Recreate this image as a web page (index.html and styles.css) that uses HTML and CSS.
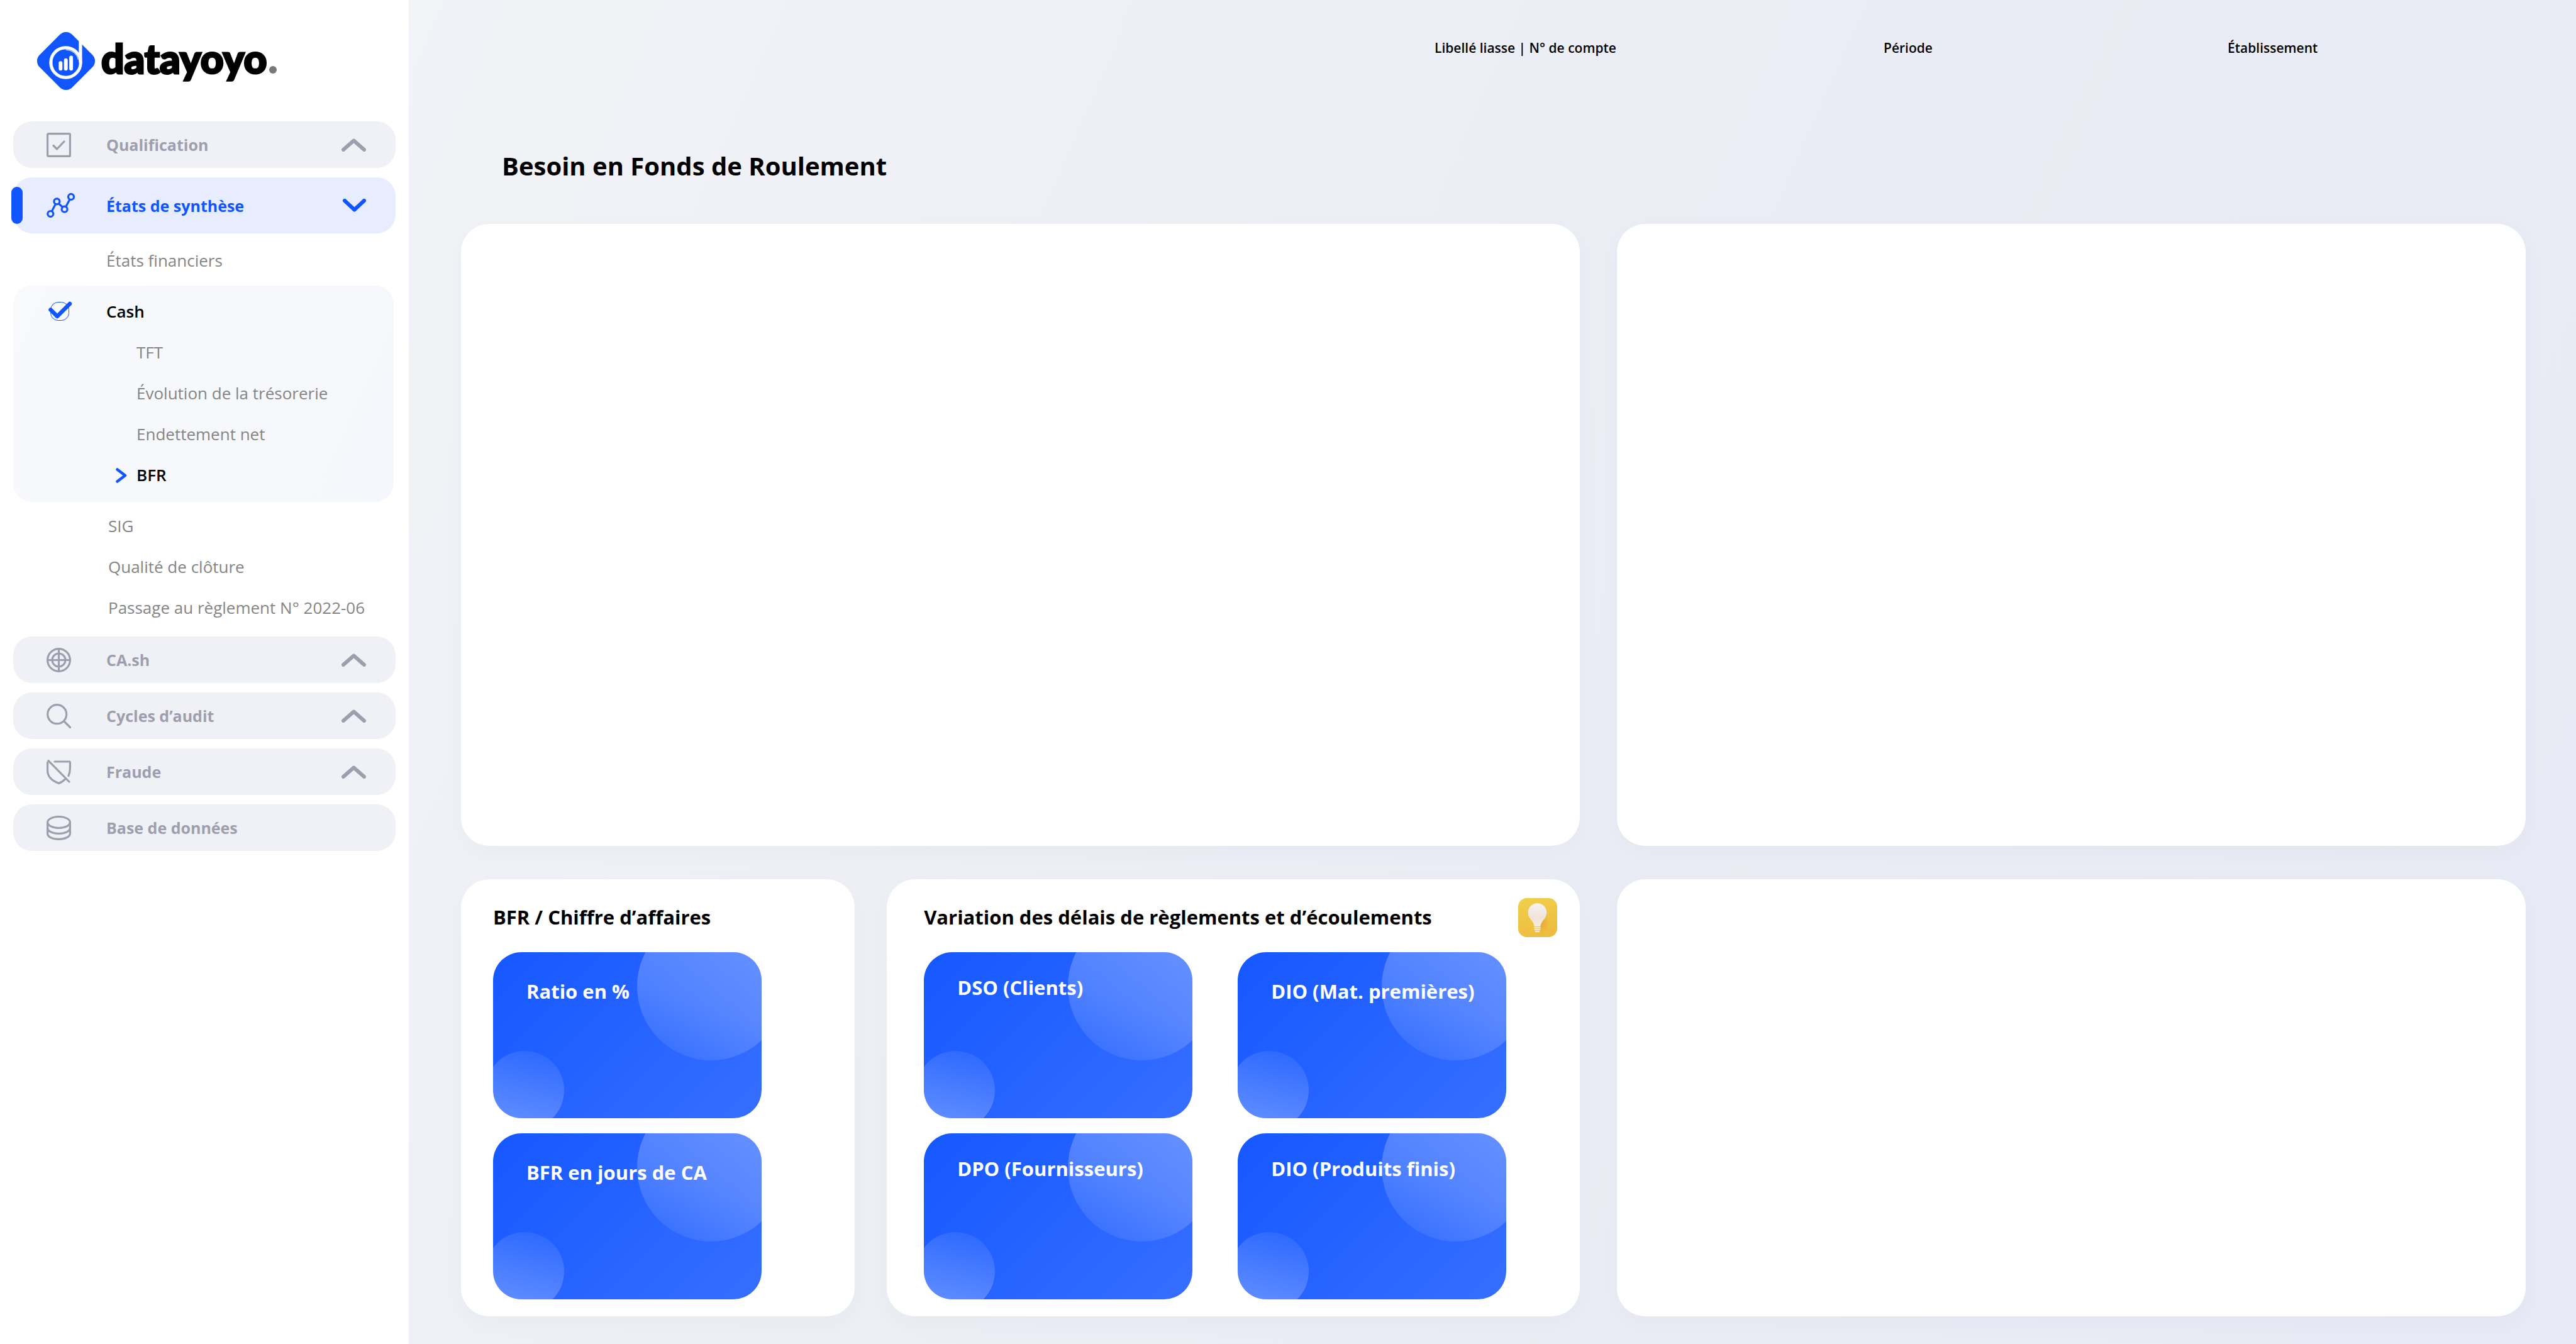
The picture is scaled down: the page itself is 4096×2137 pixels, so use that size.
FILE: index.html
```html
<!DOCTYPE html>
<html lang="fr">
<head>
<meta charset="utf-8">
<meta name="viewport" content="width=device-width, initial-scale=1">
<title>datayoyo – Besoin en Fonds de Roulement</title>
<link rel="stylesheet" href="styles.css">
</head>
<body>
<div class="app">
  <aside class="sidebar">
    <a class="brand" href="#">
      <svg class="brand-mark" viewBox="0 0 93 93" aria-hidden="true">
        <rect x="9.5" y="9.5" width="74" height="74" rx="14" fill="#1155ff" transform="rotate(45 46.5 46.5)"/>
        <path d="M67 8h5.300v41h-5.300z" fill="#fff"/>
        <circle cx="46" cy="49" r="24" fill="none" stroke="#fff" stroke-width="5"/>
        <path d="M27 60a21 21 0 0 1 4-27M46 28.500a20 20 0 0 1 20 16" fill="none" stroke="#fff" stroke-width="1"/>
        <path d="M37.700 49.700v9.300M46.200 45.300v13.700M54.700 41v18" fill="none" stroke="#fff" stroke-width="6" stroke-linecap="round"/>
      </svg>
      <span class="brand-name">datayoyo</span><span class="brand-dot"></span>
    </a>

    <nav class="nav">
      <button class="nav-item" type="button">
        <span class="nav-icon"><svg viewBox="0 0 39 39" width="39" height="39"><rect x="1.600" y="1.600" width="35.800" height="35.800" rx="1.500"/><path d="M11 20.500l5.500 5.500L28 14"/></svg></span>
        <span class="nav-label">Qualification</span>
        <svg class="chevron" viewBox="0 0 39 21" width="39" height="21"><path d="M3 18L19.500 3.500 36 18"/></svg>
      </button>

      <button class="nav-item nav-item-active" type="button">
        <span class="nav-icon"><svg viewBox="0 0 45 39" width="45" height="39"><circle cx="6.300" cy="33" r="4.500"/><circle cx="16.400" cy="13.300" r="4.500"/><circle cx="28.600" cy="25.700" r="4.500"/><circle cx="39" cy="6" r="4.500"/><path d="M8.500 28.800l5.800-11.300M19.500 17l6 5.200M30.800 21.500l6-11.300"/></svg></span>
        <span class="nav-label">États de synthèse</span>
        <svg class="chevron" viewBox="0 0 39 21" width="39" height="21"><path d="M5 3l15.500 14.500L36 3"/></svg>
      </button>

      <a class="nav-link nav-link-top nav-link-first" href="#">États financiers</a>

      <div class="nav-group">
        <a class="nav-link nav-link-top nav-link-current" href="#"><svg class="group-check" viewBox="0 0 38 32" width="38" height="32"><rect x="3.500" y="1.500" width="29" height="29" rx="12" stroke-width="1"/><path d="M3.500 13.500L14 24 34 4" stroke-width="6.500"/></svg>Cash</a>
        <a class="nav-link nav-sub" href="#">TFT</a>
        <a class="nav-link nav-sub" href="#">Évolution de la trésorerie</a>
        <a class="nav-link nav-sub" href="#">Endettement net</a>
        <a class="nav-link nav-sub nav-link-current" href="#"><svg class="sub-arrow" viewBox="0 0 18 24" width="18" height="24"><path d="M2.500 2.500L15 12 2.500 21.500" stroke-width="4.500"/></svg>BFR</a>
      </div>

      <div class="nav-links">
        <a class="nav-link" href="#">SIG</a>
        <a class="nav-link" href="#">Qualité de clôture</a>
        <a class="nav-link" href="#">Passage au règlement N° 2022-06</a>
      </div>

      <button class="nav-item" type="button">
        <span class="nav-icon"><svg viewBox="0 0 39 39" width="39" height="39"><circle cx="19.500" cy="19.500" r="17.900"/><circle cx="19.500" cy="19.500" r="10.500"/><path d="M19.500 1.500v36M1.500 19.500h36"/></svg></span>
        <span class="nav-label">CA.sh</span>
        <svg class="chevron" viewBox="0 0 39 21" width="39" height="21"><path d="M3 18L19.500 3.500 36 18"/></svg>
      </button>
      <button class="nav-item" type="button">
        <span class="nav-icon"><svg viewBox="0 0 39 39" width="39" height="39"><circle cx="16.700" cy="16.700" r="15"/><path d="M28 28l9.500 9.500"/></svg></span>
        <span class="nav-label">Cycles d’audit</span>
        <svg class="chevron" viewBox="0 0 39 21" width="39" height="21"><path d="M3 18L19.500 3.500 36 18"/></svg>
      </button>
      <button class="nav-item" type="button">
        <span class="nav-icon"><svg viewBox="0 0 39 39" width="39" height="39"><path d="M3 1.600L36 35M13 3h23.400q1 0 1 1v9q0 7-2.400 12.500M1.600 4v13q0 14 17.900 20.400 6-2 10.500-7"/></svg></span>
        <span class="nav-label">Fraude</span>
        <svg class="chevron" viewBox="0 0 39 21" width="39" height="21"><path d="M3 18L19.500 3.500 36 18"/></svg>
      </button>
      <button class="nav-item" type="button">
        <span class="nav-icon"><svg viewBox="0 0 39 39" width="39" height="39"><ellipse cx="19.500" cy="10.500" rx="17.900" ry="9"/><path d="M1.600 10.500v18c0 5 8 8.900 17.900 8.900s17.900-4 17.900-8.900v-18M1.600 19.500c0 5 8 9 17.900 9s17.900-4 17.900-9"/></svg></span>
        <span class="nav-label">Base de données</span>
      </button>
    </nav>
  </aside>

  <main class="main">
    <header class="filters">
      <span class="filter filter-account">Libellé liasse | N° de compte</span>
      <span class="filter">Période</span>
      <span class="filter">Établissement</span>
    </header>
    <h1 class="page-title">Besoin en Fonds de Roulement</h1>

    <div class="board">
      <section class="card"></section>
      <section class="card"></section>

      <div class="split">
        <section class="card card-ratio">
          <div class="card-head"><h2>BFR / Chiffre d’affaires</h2></div>
          <div class="tiles tiles-single">
            <article class="tile tile-low"><h3>Ratio en %</h3></article>
            <article class="tile tile-low"><h3>BFR en jours de CA</h3></article>
          </div>
        </section>
        <section class="card card-delays">
          <div class="card-head">
            <h2>Variation des délais de règlements et d’écoulements</h2>
            <button class="tip" type="button" aria-label="Conseils">
              <svg viewBox="0 0 63 63">
                <defs>
                  <linearGradient id="tipBg" x1="0" y1="0" x2=".3" y2="1"><stop offset="0" stop-color="#f0d04c"/><stop offset="1" stop-color="#eebd40"/></linearGradient>
                  <linearGradient id="bulb" x1="0" y1="0" x2="0" y2="1"><stop offset="0" stop-color="#f5f3f3"/><stop offset=".6" stop-color="#f1e3d9"/><stop offset="1" stop-color="#f6eade"/></linearGradient>
                  <radialGradient id="glow"><stop offset="0" stop-color="#e8962a" stop-opacity=".7"/><stop offset="1" stop-color="#e8962a" stop-opacity="0"/></radialGradient>
                </defs>
                <rect width="63" height="63" rx="14" fill="url(#tipBg)"/>
                <ellipse cx="37" cy="38" rx="13" ry="20" fill="url(#glow)"/>
                <path d="M31 8.500c8.500 0 15 6.500 15 14.500 0 6-3 10-6 13.500-2 2.500-3.500 5-4 9.500h-10c-.5-4.500-2-7-4-9.500-3-3.500-6-7.500-6-13.500 0-8 6.500-14.500 15-14.500z" fill="url(#bulb)"/>
                <path d="M26.500 48h9M27 51h8M28 54h6" stroke="#fbefe0" stroke-width="2" stroke-linecap="round"/>
              </svg>
            </button>
          </div>
          <div class="tiles">
            <article class="tile"><h3>DSO (Clients)</h3></article>
            <article class="tile tile-low"><h3>DIO (Mat. premières)</h3></article>
            <article class="tile"><h3>DPO (Fournisseurs)</h3></article>
            <article class="tile"><h3>DIO (Produits finis)</h3></article>
          </div>
        </section>
      </div>
      <section class="card"></section>
    </div>
  </main>
</div>
</body>
</html>
```
FILE: styles.css
```css
* { box-sizing: border-box; }

body {
  margin: 0;
  font-family: "Open Sans", "Noto Sans", sans-serif;
  color: #000;
  background: #fff;
}

h1, h2, h3 { margin: 0; }
a { color: inherit; text-decoration: none; }
button { border: 0; padding: 0; font: inherit; cursor: pointer; }

.app {
  display: grid;
  grid-template-columns: 650px minmax(0, 1fr);
  min-height: 100vh;
}

/* Sidebar */
.sidebar { padding: 0 21px 40px; background: #fff; }

.brand {
  display: flex;
  align-items: center;
  height: 193px;
  padding-left: 38px;
}
.brand-mark { width: 92px; height: 92px; margin-right: 10px; }
.brand-name {
  padding-bottom: 8px;
  font-family: Lato, sans-serif;
  font-weight: 900;
  font-size: 64px;
  line-height: 92px;
  -webkit-text-stroke: 3px #000;
}
.brand-dot {
  width: 12px;
  height: 12px;
  margin: 29px 0 0 4px;
  border-radius: 50%;
  background: #787878;
}

.nav { display: flex; flex-direction: column; }
.nav svg {
  fill: none;
  stroke: currentColor;
  stroke-linecap: round;
  stroke-linejoin: round;
}
.nav-item {
  position: relative;
  display: flex;
  align-items: center;
  height: 74px;
  margin-bottom: 15px;
  padding: 0 47px 0 53px;
  border-radius: 30px;
  background: #f0f1f6;
  color: #9e9fae;
  font-size: 25px;
  font-weight: 700;
  text-align: left;
}
.nav-icon { display: flex; width: 95px; stroke-width: 3.200; }
.nav-label { flex: 1; }
.nav-item .chevron { stroke-width: 6; }

.nav-item-active {
  height: 89px;
  margin-bottom: 0;
  background: #e7edff;
  color: #1155ff;
}
.nav-item-active::before {
  content: "";
  position: absolute;
  top: 15px;
  bottom: 15px;
  left: -3px;
  width: 18px;
  border-radius: 9px;
  background: #1155ff;
}

.nav-link {
  position: relative;
  display: block;
  padding-left: 151px;
  color: #858585;
  font-size: 26px;
  line-height: 65px;
}
.nav-link-top { padding-left: 148px; }
.nav-link-first { margin: 11px 0 7px; }
.nav-group {
  margin-right: 3px;
  padding: 9px 0 10px;
  border-radius: 30px;
  background: linear-gradient(115deg, #f8f9fb, #f5f7fc);
}
.nav-sub { padding-left: 196px; }
.nav-link-current { color: #000; font-weight: 600; }
.nav-links { padding: 6px 0 13px; }
.group-check, .sub-arrow { position: absolute; color: #1155ff; }
.group-check { left: 56px; top: 16px; }
.sub-arrow { left: 163px; top: 21px; }

/* Main area */
.main {
  display: flex;
  flex-direction: column;
  padding: 0 80px 44px 83px;
  background: linear-gradient(114deg, #f2f3f7, #ebedf5 50%, #e7eaf4);
}
.filters {
  display: grid;
  grid-template-columns: 1548fr 714fr 547fr 474fr;
  padding-top: 61px;
  font-size: 21px;
  font-weight: 600;
  line-height: 30px;
}
.filter-account { grid-column: 2; }
.page-title {
  margin: 143px 0 62px;
  padding-left: 65px;
  font-size: 40px;
  line-height: 60px;
}

.board {
  flex: 1;
  display: grid;
  grid-template-columns: 1778fr 1445fr;
  grid-template-rows: 1fr auto;
  gap: 53px 59px;
}
.split {
  display: grid;
  grid-template-columns: 626fr 1101fr;
  gap: 51px;
}
.card {
  border-radius: 45px;
  background: #fff;
  box-shadow: 0 10px 32px rgba(60, 70, 130, .03);
}
.card-ratio { padding: 30px 30px 27px 51px; }
.card-delays { padding: 30px 36px 27px 59px; }
.card-head {
  display: flex;
  align-items: center;
  justify-content: space-between;
  height: 62px;
  margin-bottom: 24px;
}
.card-head h2 { padding-bottom: 3px; font-size: 31px; line-height: 44px; }
.tip { width: 62px; height: 62px; background: none; }
.tip svg { display: block; width: 100%; height: 100%; }

/* Blue indicator tiles with two translucent discs */
.tiles {
  display: grid;
  grid-template-columns: repeat(2, minmax(0, 427px));
  gap: 24px 72px;
}
.tiles-single { grid-template-columns: minmax(0, 427px); }
.tile {
  position: relative;
  overflow: hidden;
  height: 264px;
  padding: 34px 20px 0 53px;
  border-radius: 45px;
  color: #fff;
  background: linear-gradient(135deg, #1558ff, #366eff);
}
.tile::before,
.tile::after {
  content: "";
  position: absolute;
  border-radius: 50%;
}
.tile::before {
  width: 235px;
  height: 235px;
  left: 229px;
  top: -63px;
  background: linear-gradient(20deg, rgba(255, 255, 255, .04), rgba(255, 255, 255, .2) 40%, rgba(255, 255, 255, .33));
}
.tile::after {
  width: 125px;
  height: 125px;
  left: -12px;
  top: 157px;
  background: linear-gradient(200deg, rgba(255, 255, 255, .04), rgba(255, 255, 255, .32));
}
.tile h3 {
  position: relative;
  z-index: 1;
  font-size: 31px;
  line-height: 44px;
  white-space: nowrap;
}
.tile-low { padding-top: 40px; }
```
